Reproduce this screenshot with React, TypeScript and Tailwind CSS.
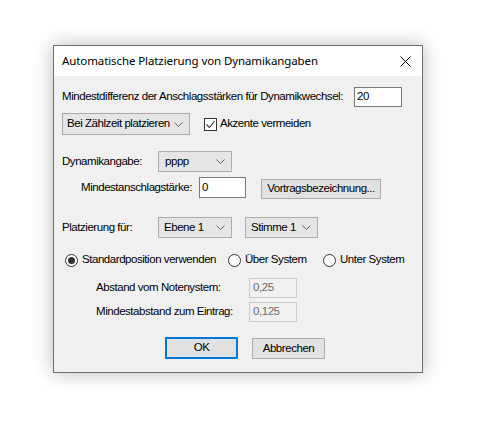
import React from "react";

const Chevron = () => (
  <svg width="9" height="5" viewBox="0 0 9 5" className="shrink-0">
    <path d="M0.5 0.5 L4.5 4.5 L8.5 0.5" fill="none" stroke="#606060" strokeWidth="1" />
  </svg>
);

const Select = ({ label, w, h = 21, pl = 6 }: { label: string; w: number; h?: number; pl?: number }) => (
  <div
    className="flex items-center justify-between border border-[#adadad] bg-[#e5e5e5] pr-[6px]"
    style={{ width: w, height: h, paddingLeft: pl }}
  >
    <span>{label}</span>
    <Chevron />
  </div>
);

const Radio = ({ checked }: { checked?: boolean }) => (
  <div className="w-[13px] h-[13px] rounded-full border border-[#333333] bg-white flex items-center justify-center shrink-0">
    {checked && <div className="w-[7px] h-[7px] rounded-full bg-[#333333]" />}
  </div>
);

export default function App() {
  return (
    <div className="w-[495px] h-[437px] bg-white pl-[53px] pt-[45px]" style={{ fontFamily: '"Liberation Sans", Arial, sans-serif' }}>
      <div className="w-[370px] h-[328px] border border-[#6f6f6f] bg-[#f0f0f0] shadow-[0_0_18px_rgba(0,0,0,0.28)] flex flex-col text-[11.5px] tracking-[-0.45px] text-black whitespace-nowrap">
        {/* title bar */}
        <div className="h-[30px] bg-white flex items-center justify-between pl-[8px] pr-[11px]">
          <span className="text-[11.5px] tracking-[-0.1px]" style={{ fontFamily: '"Noto Sans", "Open Sans", sans-serif' }}>
            Automatische Platzierung von Dynamikangaben
          </span>
          <svg width="11" height="11" viewBox="0 0 11 11">
            <path d="M0.5 0.5 L10.5 10.5 M10.5 0.5 L0.5 10.5" stroke="#000" strokeWidth="1" />
          </svg>
        </div>
        {/* body */}
        <div className="flex flex-col pl-[8px]">
          {/* row 1 */}
          <div className="mt-[11px] h-[20px] flex items-center">
            <span className="w-[292px]">Mindestdifferenz der Anschlagsstärken für Dynamikwechsel:</span>
            <div className="w-[48px] h-[20px] bg-white border border-[#7a7a7a] pl-[2px] flex items-center">20</div>
          </div>
          {/* row 2 */}
          <div className="mt-[6px] h-[22px] flex items-center">
            <Select label="Bei Zählzeit platzieren" w={128} h={22} pl={4} />
            <div className="ml-[14px] w-[13px] h-[13px] border border-[#333333] bg-white flex items-center justify-center">
              <svg width="11" height="11" viewBox="0 0 11 11">
                <path d="M1.5 5.5 L4.5 8.5 L9.5 2" fill="none" stroke="#333" strokeWidth="1.1" />
              </svg>
            </div>
            <span className="ml-[3px]">Akzente vermeiden</span>
          </div>
          {/* row 3 */}
          <div className="mt-[16px] h-[21px] flex items-center">
            <span className="w-[96px]">Dynamikangabe:</span>
            <Select label="pppp" w={74} />
          </div>
          {/* row 4 */}
          <div className="mt-[5px] h-[22px] flex items-center pl-[19px]">
            <span className="w-[118px]">Mindestanschlagstärke:</span>
            <div className="w-[47px] h-[21px] self-start bg-white border border-[#7a7a7a] pl-[2px] flex items-center">0</div>
            <div className="ml-[15px] w-[120px] h-[20px] mt-[2px] self-start bg-[#e1e1e1] border border-[#adadad] flex items-center justify-center">
              Vortragsbezeichnung...
            </div>
          </div>
          {/* row 5 */}
          <div className="mt-[18px] h-[21px] flex items-center">
            <span className="w-[96px]">Platzierung für:</span>
            <Select label="Ebene 1" w={74} pl={5} />
            <div className="ml-[13px]">
              <Select label="Stimme 1" w={73} pl={5} />
            </div>
          </div>
          {/* row 6 */}
          <div className="mt-[14px] h-[16px] flex items-center pl-[3px]">
            <div className="w-[163px] flex items-center gap-[4px]">
              <Radio checked />
              <span>Standardposition verwenden</span>
            </div>
            <div className="w-[95px] flex items-center gap-[4px]">
              <Radio />
              <span>Über System</span>
            </div>
            <div className="flex items-center gap-[4px]">
              <Radio />
              <span>Unter System</span>
            </div>
          </div>
          {/* row 7 */}
          <div className="mt-[10px] h-[20px] flex items-center pl-[34px]">
            <span className="w-[153px]">Abstand vom Notenystem:</span>
            <div className="w-[48px] h-[20px] bg-[#f0f0f0] border border-[#cccccc] text-[#6d6d6d] pl-[3px] flex items-center">0,25</div>
          </div>
          {/* row 8 */}
          <div className="mt-[4px] h-[20px] flex items-center pl-[34px]">
            <span className="w-[153px]">Mindestabstand zum Eintrag:</span>
            <div className="w-[48px] h-[20px] bg-[#f0f0f0] border border-[#cccccc] text-[#6d6d6d] pl-[3px] flex items-center">0,125</div>
          </div>
          {/* row 9 */}
          <div className="mt-[15px] h-[22px] flex items-start pl-[103px]">
            <div className="w-[73px] h-[22px] bg-[#e1e1e1] border-2 border-[#0078d7] flex items-center justify-center">OK</div>
            <div className="ml-[14px] mt-[1px] w-[73px] h-[21px] bg-[#e1e1e1] border border-[#adadad] flex items-center justify-center">
              Abbrechen
            </div>
          </div>
        </div>
      </div>
    </div>
  );
}
